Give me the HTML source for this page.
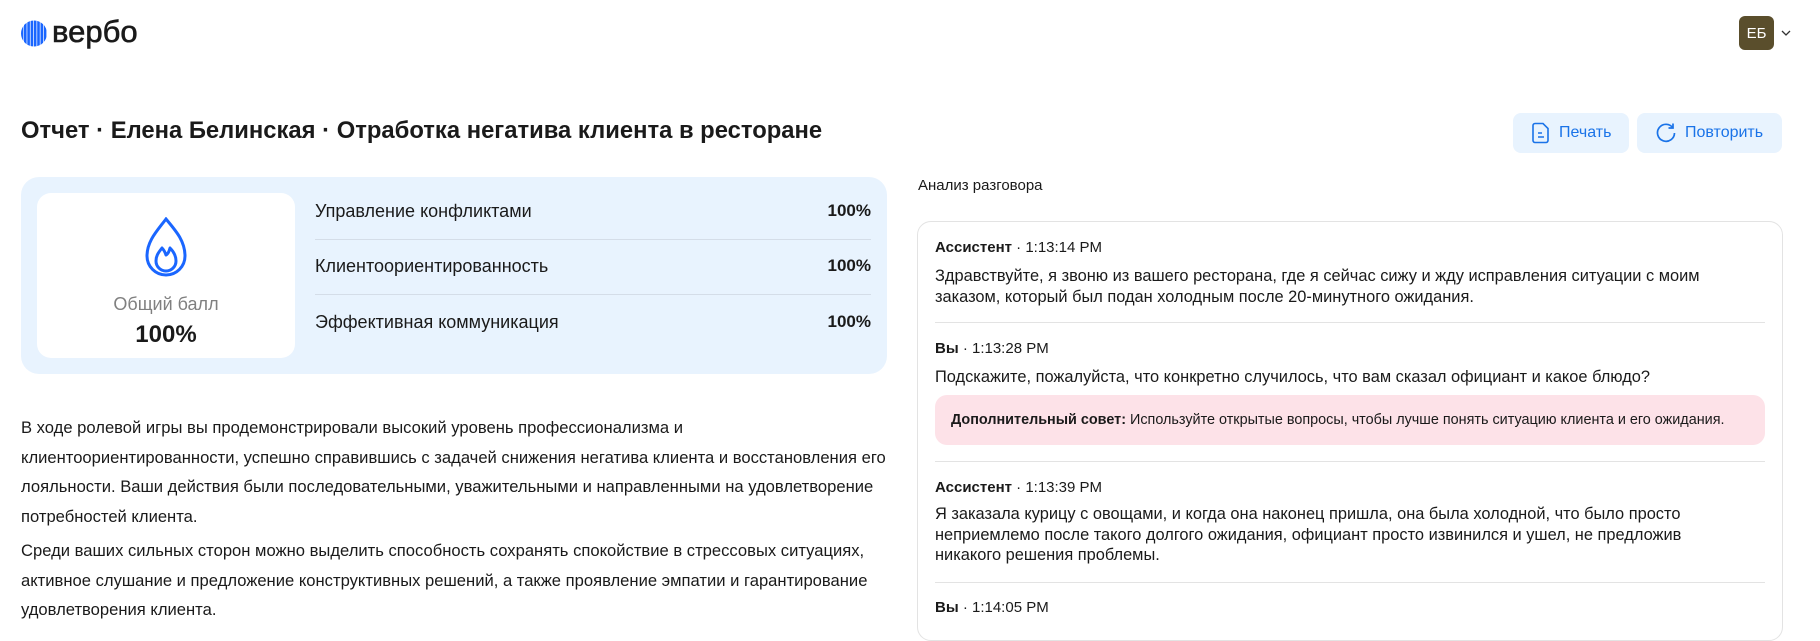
<!DOCTYPE html>
<html><head><meta charset="utf-8"><style>
*{box-sizing:border-box;margin:0;padding:0}
body{width:1820px;height:626px;overflow:hidden;background:#fff;font-family:"Liberation Sans","Noto Sans CJK SC",sans-serif;color:#1a1a1a;position:relative}
.a{position:absolute}
.btn{position:absolute;top:113px;height:40px;background:#e8f3fe;border-radius:8px;color:#1a73e8;font-size:16px;display:flex;align-items:center;gap:8px;padding-left:18px}
.row{position:absolute;left:315px;width:556px;font-size:18px;display:flex;justify-content:space-between}
.row b{font-weight:bold;font-size:17px}
.hr{position:absolute;height:1px;background:#d4dde8}
.p{position:absolute;left:21px;width:900px;font-size:16.6px;line-height:29.5px;white-space:nowrap}
.m{position:absolute;left:935px;font-size:16.4px;line-height:20.5px;width:770px}
.h{position:absolute;left:935px;font-size:15px}
.h b{font-weight:bold}
</style></head><body>
<svg class="a" style="left:21px;top:20px" width="26" height="27" viewBox="0 0 26 27">
<defs><clipPath id="c"><circle cx="13" cy="13.5" r="13"/></clipPath></defs>
<g clip-path="url(#c)" fill="#1a66ff">
<rect x="0" y="5" width="2.4" height="17"/><rect x="3" y="2" width="2.6" height="23"/><rect x="6.3" y="0" width="2.6" height="27"/><rect x="9.6" y="0" width="2.6" height="27"/><rect x="12.9" y="0" width="2.6" height="27"/><rect x="16.2" y="0" width="2.6" height="27"/><rect x="19.5" y="0" width="2.6" height="27"/><rect x="22.8" y="2" width="2.6" height="23"/></g></svg>
<div class="a" style="left:52px;top:14px;font-size:31px;color:#1a1a1a;-webkit-text-stroke:0.6px #1a1a1a">вербо</div>
<div class="a" style="left:1739px;top:16px;width:35px;height:34px;background:#5a4e2c;border-radius:6px;color:#fff;font-size:15px;display:flex;align-items:center;justify-content:center">ЕБ</div>
<svg class="a" style="left:1780px;top:28px" width="12" height="10"><path d="M2 3l4 4 4-4" stroke="#333" fill="none" stroke-width="1.3"/></svg>
<div class="a" style="left:21px;top:117px;font-size:23.8px;font-weight:bold">Отчет · Елена Белинская · Отработка негатива клиента в ресторане</div>
<div class="btn" style="left:1513px;width:116px"><svg width="20" height="22" viewBox="0 0 20 22"><path d="M4 1.5h8l5 5v12a2 2 0 0 1-2 2H4a2 2 0 0 1-2-2v-15a2 2 0 0 1 2-2z" fill="none" stroke="#1a73e8" stroke-width="1.6"/><path d="M7 11h4M7 15h6" stroke="#1a73e8" stroke-width="1.6"/></svg>Печать</div>
<div class="btn" style="left:1637px;width:145px"><svg width="22" height="22" viewBox="0 0 22 22"><path d="M18 6A8.5 8.5 0 1 0 19.5 11" fill="none" stroke="#1a73e8" stroke-width="1.7"/><path d="M18 1.5V6h-4.5" fill="none" stroke="#1a73e8" stroke-width="1.7"/></svg>Повторить</div>
<div class="a" style="left:21px;top:177px;width:866px;height:197px;background:#e8f3fe;border-radius:18px"></div>
<div class="a" style="left:37px;top:193px;width:258px;height:165px;background:#fff;border-radius:14px"></div>
<svg class="a" style="left:142px;top:217px" width="50" height="60" viewBox="0 0 50 60"><path d="M24 2C15 14 5 24 5 39a19 19 0 0 0 38 0C43 24 34 14 24 2z" fill="none" stroke="#1a66ff" stroke-width="3"/><path d="M20 31c-4 5-6 8-6 13a10 10 0 0 0 20 0c0-6-3-10-6-13-1 4-2 6-4 7-1-3-2-5-4-7z" fill="none" stroke="#1a66ff" stroke-width="3" stroke-linejoin="round"/></svg>
<div class="a" style="left:37px;width:258px;top:294px;text-align:center;font-size:18px;color:#808080">Общий балл</div>
<div class="a" style="left:37px;width:258px;top:321px;text-align:center;font-size:24px;font-weight:bold">100%</div>
<div class="row" style="top:201px"><span>Управление конфликтами</span><b>100%</b></div>
<div class="hr" style="left:315px;width:556px;top:239px"></div>
<div class="row" style="top:256px"><span>Клиентоориентированность</span><b>100%</b></div>
<div class="hr" style="left:315px;width:556px;top:294px"></div>
<div class="row" style="top:312px"><span>Эффективная коммуникация</span><b>100%</b></div>
<div class="p" style="top:413px">В ходе ролевой игры вы продемонстрировали высокий уровень профессионализма и<br>клиентоориентированности, успешно справившись с задачей снижения негатива клиента и восстановления его<br>лояльности. Ваши действия были последовательными, уважительными и направленными на удовлетворение<br>потребностей клиента.</div>
<div class="p" style="top:536px">Среди ваших сильных сторон можно выделить способность сохранять спокойствие в стрессовых ситуациях,<br>активное слушание и предложение конструктивных решений, а также проявление эмпатии и гарантирование<br>удовлетворения клиента.</div>
<div class="a" style="left:918px;top:177px;font-size:15px">Анализ разговора</div>
<div class="a" style="left:917px;top:221px;width:866px;height:420px;border:1px solid #e3e3e3;border-radius:14px"></div>
<div class="h" style="top:239px"><b>Ассистент</b> · 1:13:14 PM</div>
<div class="m" style="top:266px">Здравствуйте, я звоню из вашего ресторана, где я сейчас сижу и жду исправления ситуации с моим заказом, который был подан холодным после 20-минутного ожидания.</div>
<div class="hr" style="left:935px;width:830px;top:322px;background:#e3e3e3"></div>
<div class="h" style="top:340px"><b>Вы</b> · 1:13:28 PM</div>
<div class="m" style="top:367px">Подскажите, пожалуйста, что конкретно случилось, что вам сказал официант и какое блюдо?</div>
<div class="a" style="left:935px;top:395px;width:830px;height:50px;background:#fde2e8;border-radius:12px;font-size:14.4px;padding:17px 16px 0">
<b>Дополнительный совет:</b> Используйте открытые вопросы, чтобы лучше понять ситуацию клиента и его ожидания.</div>
<div class="hr" style="left:935px;width:830px;top:461px;background:#e3e3e3"></div>
<div class="h" style="top:479px"><b>Ассистент</b> · 1:13:39 PM</div>
<div class="m" style="top:504px">Я заказала курицу с овощами, и когда она наконец пришла, она была холодной, что было просто неприемлемо после такого долгого ожидания, официант просто извинился и ушел, не предложив никакого решения проблемы.</div>
<div class="hr" style="left:935px;width:830px;top:582px;background:#e3e3e3"></div>
<div class="h" style="top:599px"><b>Вы</b> · 1:14:05 PM</div>
</body></html>
